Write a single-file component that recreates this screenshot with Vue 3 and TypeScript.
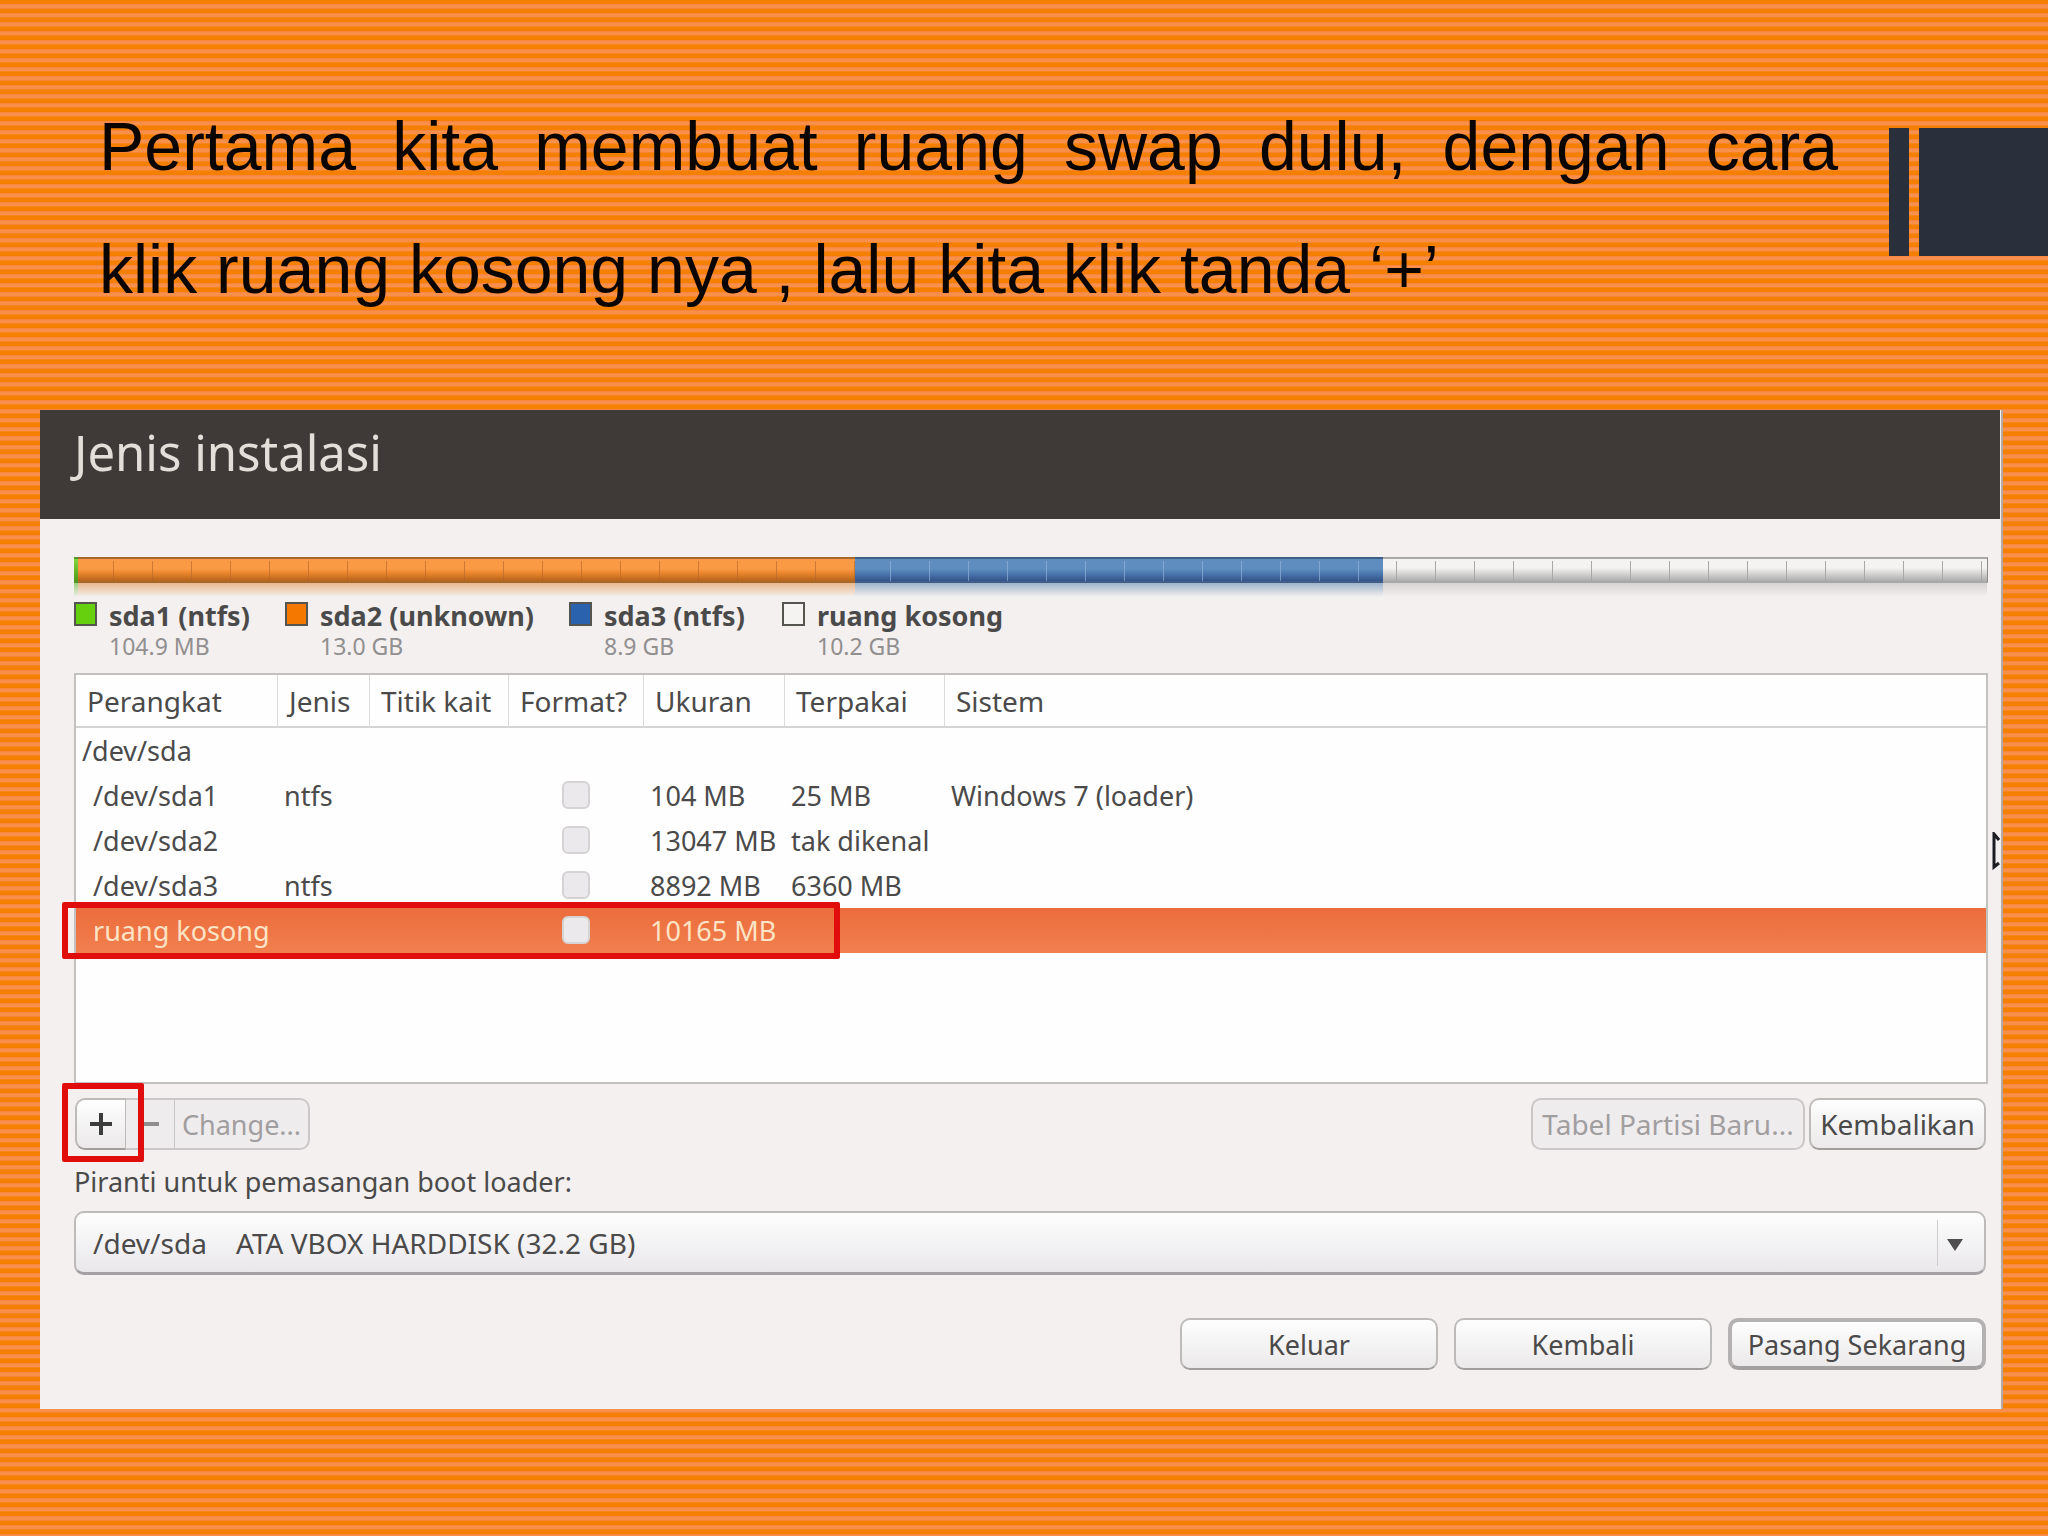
<script setup lang="ts">
import { ref } from 'vue'

interface Segment {
  key: string
  name: string
  size: string
  share: number
}

interface Row {
  device: string
  type: string
  size: string
  used: string
  system: string
  child: boolean
  selected: boolean
}

const segments: Segment[] = [
  { key: 'green', name: 'sda1 (ntfs)', size: '104.9 MB', share: 0.2 },
  { key: 'orange', name: 'sda2 (unknown)', size: '13.0 GB', share: 40.6 },
  { key: 'blue', name: 'sda3 (ntfs)', size: '8.9 GB', share: 27.6 },
  { key: 'free', name: 'ruang kosong', size: '10.2 GB', share: 31.6 },
]

const rows: Row[] = [
  { device: '/dev/sda', type: '', size: '', used: '', system: '', child: false, selected: false },
  { device: '/dev/sda1', type: 'ntfs', size: '104 MB', used: '25 MB', system: 'Windows 7 (loader)', child: true, selected: false },
  { device: '/dev/sda2', type: '', size: '13047 MB', used: 'tak dikenal', system: '', child: true, selected: false },
  { device: '/dev/sda3', type: 'ntfs', size: '8892 MB', used: '6360 MB', system: '', child: true, selected: false },
  { device: 'ruang kosong', type: '', size: '10165 MB', used: '', system: '', child: true, selected: true },
]

const bootDevice = ref('sda')
</script>

<template>
  <main class="slide">
    <header class="top">
      <h1 class="heading">
        <span class="line spread">Pertama kita membuat ruang swap dulu, dengan cara</span>
        <span class="line">klik ruang kosong nya , lalu kita klik tanda ‘+’</span>
      </h1>
      <div class="deco" aria-hidden="true"><i class="thin"></i><i class="thick"></i></div>
    </header>

    <section class="installer">
      <h2 class="title">Jenis instalasi</h2>
      <div class="content">
        <div class="bar">
          <div v-for="s in segments" :key="s.key" class="segment" :class="s.key" :style="{ width: s.share + '%' }"></div>
        </div>

        <ul class="legend">
          <li v-for="s in segments" :key="s.key">
            <i class="swatch" :class="s.key"></i>
            <div>
              <strong>{{ s.name }}</strong>
              <small>{{ s.size }}</small>
            </div>
          </li>
        </ul>

        <div class="list">
          <table>
            <colgroup>
              <col class="c-device" /><col class="c-type" /><col class="c-mount" /><col class="c-format" />
              <col class="c-size" /><col class="c-used" /><col />
            </colgroup>
            <thead>
              <tr>
                <th>Perangkat</th><th>Jenis</th><th>Titik kait</th><th>Format?</th>
                <th>Ukuran</th><th>Terpakai</th><th>Sistem</th>
              </tr>
            </thead>
            <tbody>
              <tr v-for="r in rows" :key="r.device" :class="{ selected: r.selected }">
                <td :class="{ child: r.child }">{{ r.device }}</td>
                <td>{{ r.type }}</td>
                <td></td>
                <td class="tick"><input v-if="r.child" type="checkbox" :aria-label="'Format ' + r.device" /></td>
                <td>{{ r.size }}</td>
                <td>{{ r.used }}</td>
                <td>{{ r.system }}</td>
              </tr>
            </tbody>
          </table>
          <div class="mark mark-row"></div>
          <svg class="pointer" viewBox="0 0 8 38" aria-hidden="true">
            <path d="M7 8 L2 2 V35 L7 31" fill="none" stroke="#1c1c22" stroke-width="3" />
          </svg>
        </div>

        <div class="actions">
          <div class="group">
            <button type="button" class="add" aria-label="Tambah">
              <svg viewBox="0 0 24 24"><path d="M12 1v22M1 12h22" stroke="#3c3c3c" stroke-width="4" /></svg>
            </button>
            <button type="button" class="off remove" aria-label="Hapus" disabled>
              <svg viewBox="0 0 24 24"><path d="M3 12h18" stroke="#8f8d8d" stroke-width="4" /></svg>
            </button>
            <button type="button" class="off change" disabled>Change...</button>
            <div class="mark mark-add"></div>
          </div>
          <div class="right">
            <button type="button" class="btn off table-btn" disabled>Tabel Partisi Baru...</button>
            <button type="button" class="btn revert">Kembalikan</button>
          </div>
        </div>

        <label class="label" for="boot">Piranti untuk pemasangan boot loader:</label>
        <div class="combo">
          <select id="boot" v-model="bootDevice">
            <option value="sda">/dev/sda&nbsp;&nbsp;&nbsp;&nbsp;ATA VBOX HARDDISK (32.2 GB)</option>
          </select>
          <span class="arrow"></span>
        </div>

        <footer class="footer">
          <button type="button" class="btn">Keluar</button>
          <button type="button" class="btn">Kembali</button>
          <button type="button" class="btn primary">Pasang Sekarang</button>
        </footer>
      </div>
    </section>
  </main>
</template>

<style>
body {
  background: repeating-linear-gradient(#f58000 0 4px, #f88640 4px 5px, #f88f4a 5px 8px, #f78620 8px 9px);
}
</style>

<style scoped>
* {
  box-sizing: border-box;
}
.slide {
  overflow: hidden;
  min-height: 100vh;
  font-family: "Noto Sans", "Open Sans", sans-serif;
  font-size: 27px;
  color: #4b4a4a;
}
.top {
  display: flex;
  justify-content: space-between;
  gap: 51px;
  padding: 85px 0 79px 99px;
}
.heading {
  flex: 1;
  margin: 0;
  font: 400 68px/123px "Liberation Sans", Arial, sans-serif;
  color: #0a0500;
}
.line {
  display: block;
}
.spread {
  text-align-last: justify;
}
.deco {
  display: flex;
  gap: 10px;
  height: 128px;
  margin-top: 43px;
}
.deco i {
  background: #29303b;
}
.thin {
  width: 20px;
}
.thick {
  width: 129px;
}
.installer {
  margin: 0 45px 0 40px;
  background: #f3f0ef;
  border-right: 2px solid #b3aaa4;
}
.title {
  margin: 0 1px 0 0;
  padding: 0 34px 25px;
  background: #3f3938;
  color: #e3dfd8;
  font-size: 49px;
  font-weight: 400;
  line-height: 84px;
}
.content {
  padding: 38px 13px 39px 34px;
}
.bar {
  display: flex;
  height: 26px;
  margin-bottom: 14px;
}
.segment {
  position: relative;
  border-top: 2px solid;
  border-bottom: 2px solid;
}
.segment::before {
  content: "";
  position: absolute;
  inset: 2px 0 0;
}
.segment::after {
  content: "";
  position: absolute;
  left: 0;
  right: 0;
  top: 24px;
  height: 14px;
}
.segment.green {
  background: linear-gradient(#7fd83c, #4f9a1b);
  border-color: #4d9a2a;
}
.segment.green::after {
  background: linear-gradient(#9bd07c, #f3f0ef00);
}
.segment.orange {
  background: linear-gradient(#fb9a44 0 45%, #e8842c 65%, #b5651c);
  border-color: #a8682c #8e4c12;
}
.segment.orange::before {
  background: repeating-linear-gradient(90deg, #b0652a99 0 1px, #0000 1px 39px) 35px 0;
}
.segment.orange::after {
  background: linear-gradient(#e9b88b, #f3f0ef00);
}
.segment.blue {
  background: linear-gradient(#5f8dbf 0 45%, #4b79b0 65%, #34538a);
  border-color: #3f5f88 #2a4170;
}
.segment.blue::before {
  background: repeating-linear-gradient(90deg, #9bbbdd99 0 1px, #0000 1px 39px) 35px 0;
}
.segment.blue::after {
  background: linear-gradient(#9db2cb, #f3f0ef00);
}
.segment.free {
  background: linear-gradient(#f4f3f2 0 40%, #dcdbda 60%, #aeadad);
  border-color: #a9a8a8 #767575;
  border-right: 1px solid #8a8989;
}
.segment.free::before {
  background: repeating-linear-gradient(90deg, #a9a8a8 0 1px, #0000 1px 39px) 13px 0;
}
.segment.free::after {
  background: linear-gradient(#d6d4d3, #f3f0ef00);
}
.segment::before {
  background-repeat: no-repeat !important;
}
.legend {
  display: grid;
  grid-template-columns: 211px 284px 213px auto;
  justify-content: start;
  height: 76px;
  margin: 0;
  padding: 5px 0 0;
  list-style: none;
}
.legend li {
  display: flex;
  gap: 12px;
  white-space: nowrap;
}
.swatch {
  width: 23px;
  height: 24px;
  border: 2px solid #55554f;
}
.swatch.green {
  background: #66cf0e;
}
.swatch.orange {
  background: #f57900;
}
.swatch.blue {
  background: #2a62ad;
}
.swatch.free {
  background: #f5f2f2;
}
.legend strong,
.legend small {
  display: block;
}
.legend strong {
  line-height: 28px;
  font-size: 27px;
}
.legend small {
  line-height: 32px;
  font-size: 23px;
  color: #918f8f;
}
.list {
  position: relative;
  height: 411px;
  background: #fefefe;
  border: 2px solid #c3c0c0;
}
table {
  width: 100%;
  table-layout: fixed;
  border-collapse: separate;
  border-spacing: 0;
}
.c-device {
  width: 202px;
}
.c-type {
  width: 92px;
}
.c-mount {
  width: 139px;
}
.c-format {
  width: 135px;
}
.c-size {
  width: 141px;
}
.c-used {
  width: 160px;
}
th,
td {
  padding: 0 0 0 6px;
  text-align: left;
  white-space: nowrap;
}
th {
  height: 53px;
  padding-left: 11px;
  font-size: 28px;
  font-weight: 400;
  border-right: 1px solid #dddada;
  border-bottom: 2px solid #d6d3d3;
}
th:last-child {
  border-right: 0;
}
td {
  height: 45px;
}
td.child {
  padding-left: 17px;
}
td.tick {
  padding: 0 0 2px 53px;
  line-height: 0;
}
input {
  appearance: none;
  width: 28px;
  height: 28px;
  margin: 0;
  background: #ebe9eb;
  border: 2px solid #d5d3d4;
  border-radius: 6px;
}
.selected td {
  color: #fde3c6;
  background: linear-gradient(#ec6c3c, #f17f4f);
}
.mark {
  position: absolute;
  border: 6px solid #e10d0d;
  border-radius: 2px;
  pointer-events: none;
}
.mark-row {
  left: -14px;
  top: 227px;
  width: 778px;
  height: 57px;
}
.mark-add {
  left: -13px;
  top: -15px;
  width: 82px;
  height: 79px;
}
.pointer {
  position: absolute;
  right: -14px;
  top: 157px;
  width: 8px;
  height: 38px;
}
.actions,
.right,
.group,
.footer {
  display: flex;
}
.actions {
  justify-content: space-between;
  padding: 14px 2px 10px 1px;
}
.group {
  position: relative;
}
button {
  height: 52px;
  padding: 0;
  font: inherit;
  font-size: 28px;
  color: inherit;
  white-space: nowrap;
  background: linear-gradient(#fefefe, #ebe9e9);
  border: 2px solid #bdbaba;
  border-bottom-color: #a19e9e;
}
button.off {
  color: #a19e9f;
  background: #efecee;
  border-color: #cac7c8;
}
.add {
  width: 51px;
  border-right-width: 1px;
  border-radius: 10px 0 0 10px;
}
.remove {
  width: 49px;
  border-left: 0;
  border-right-width: 1px;
}
.change {
  width: 135px;
  font-size: 27px;
  border-left: 0;
  border-radius: 0 10px 10px 0;
}
.group svg {
  display: block;
  width: 24px;
  height: 24px;
  margin: auto;
}
.right {
  gap: 4px;
}
.btn {
  border-radius: 10px;
}
.table-btn {
  width: 274px;
}
.revert {
  width: 177px;
}
.label {
  display: block;
  line-height: 44px;
}
.combo {
  position: relative;
  margin: 7px 2px 43px 0;
}
select {
  appearance: none;
  display: block;
  width: 100%;
  height: 64px;
  padding: 0 60px 0 17px;
  font: inherit;
  font-size: 28px;
  color: inherit;
  background: linear-gradient(#fefefe, #e9e7ea);
  border: 2px solid #bdbaba;
  border-bottom: 3px solid #a3a1a3;
  border-radius: 10px;
}
.arrow {
  position: absolute;
  right: 0;
  top: 9px;
  width: 49px;
  height: 46px;
  border-left: 1px solid #cfcccd;
  pointer-events: none;
}
.arrow::after {
  content: "";
  position: absolute;
  left: 9px;
  top: 19px;
  border: 8px solid transparent;
  border-top: 12px solid #4f4d50;
  border-bottom: 0;
}
.footer {
  justify-content: flex-end;
  gap: 16px;
  padding-right: 2px;
}
.footer .btn {
  width: 258px;
  font-size: 27px;
}
.footer .primary {
  border: 4px solid #b3b1b1;
  border-bottom-color: #a3a0a0;
}
</style>
